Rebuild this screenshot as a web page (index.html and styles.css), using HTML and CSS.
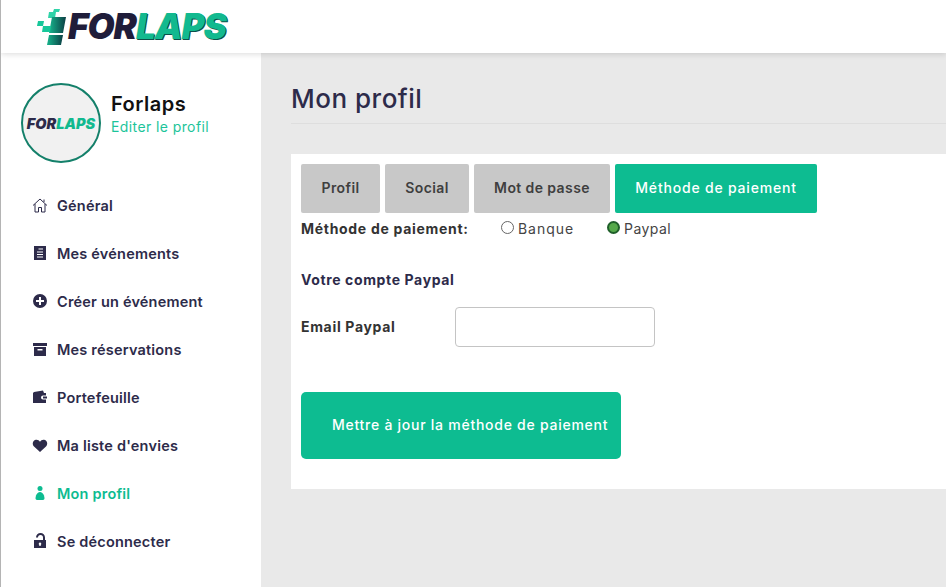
FILE: index.html
```html
<!DOCTYPE html>
<html>
  <head>
    <title>Forlaps - Mon profil</title>
    <meta name="viewport" content="width=device-width, initial-scale=1.0" />
    <link rel="stylesheet" href="styles.css">
  </head>
  <body>
    <header class="topbar">
      <div class="logo">
        <svg class="logo-flag" width="32" height="38" viewBox="0 0 32 38">
          <defs>
            <linearGradient id="flagFill" x1="0" x2="1" y1="0" y2="0">
              <stop offset="0" stop-color="#17b48c" />
              <stop offset="1" stop-color="#0b3f44" />
            </linearGradient>
          </defs>
          <polygon points="18,1 24,1 23,4 17,4" fill="#2fd3a8" />
          <polygon points="13,4 20,4 19,10 12,10" fill="#2fd3a8" />
          <polygon points="16,9 30,9 27,25 13,25" fill="url(#flagFill)" />
          <polygon points="2,13 8,13 7,18 1,18" fill="#17c79a" />
          <polygon points="7,18 15,18 14,24 6,24" fill="#17c79a" />
          <polygon points="13,27 27,27 25,37 11,37" fill="url(#flagFill)" />
        </svg>
        <span class="logo-text">FOR<em>LAPS</em></span>
      </div>
    </header>

    <div class="page">
      <aside class="sidebar">
        <div class="user">
          <div class="avatar"><span>FOR<em>LAPS</em></span></div>
          <div class="user-info">
            <div class="user-name">Forlaps</div>
            <a class="user-edit">Editer le profil</a>
          </div>
        </div>

        <nav class="menu">
          <a class="menu-item">
            <svg class="icon" viewBox="0 0 16 16" fill="none" stroke="currentColor" stroke-width="1"><path d="M1 8.500 8 2l7 6.500M12 5V2.500M3 7v8h3.500v-4.500h3V15H13V7" /></svg>
            Général
          </a>
          <a class="menu-item">
            <svg class="icon" viewBox="0 0 16 16"><path fill-rule="evenodd" d="M2 1h12v14H2zM6.500 3.500v1H11v-1zM5 6.500v1h6v-1zM5 9v1h6V9zM5 11.500v1h6v-1z" fill="currentColor" /></svg>
            Mes événements
          </a>
          <a class="menu-item">
            <svg class="icon" viewBox="0 0 16 16"><path fill-rule="evenodd" d="M8 1a7 7 0 1 0 0 14A7 7 0 0 0 8 1zM7 4h2v3h3v2H9v3H7V9H4V7h3z" fill="currentColor" /></svg>
            Créer un événement
          </a>
          <a class="menu-item">
            <svg class="icon" viewBox="0 0 16 16"><path fill-rule="evenodd" d="M1 2h14v3H1zM2 6h12v9H2zM5.500 8v1.500h5V8z" fill="currentColor" /></svg>
            Mes réservations
          </a>
          <a class="menu-item">
            <svg class="icon" viewBox="0 0 16 16"><path fill-rule="evenodd" d="M1 4 2 3l9-1.500L12 4h2v2.500h-3a2 2 0 0 0 0 4h3V14H1zM11 7.500h4v2h-4z" fill="currentColor" /></svg>
            Portefeuille
          </a>
          <a class="menu-item">
            <svg class="icon" viewBox="0 0 16 16"><path d="M8 15 2 9.500C0 7.500.5 4 3 3c2-.8 4 0 5 1.700C9 3 11 2.200 13 3c2.500 1 3 4.500 1 6.500z" fill="currentColor" /></svg>
            Ma liste d'envies
          </a>
          <a class="menu-item active">
            <svg class="icon" viewBox="0 0 16 16"><circle cx="8" cy="3.500" r="2.500" fill="currentColor" /><path d="M8 7c3 0 4.500 4 4.500 6.500 0 1.500-1.500 1.500-2 1.500h-5c-.5 0-2 0-2-1.500C3.500 11 5 7 8 7z" fill="currentColor" /></svg>
            Mon profil
          </a>
          <a class="menu-item">
            <svg class="icon" viewBox="0 0 16 16"><path fill-rule="evenodd" d="M2 7h9V4.500a2.500 2.500 0 0 0-5 0H4a4.500 4.500 0 0 1 9 0V7h1v8H2zM8 9.500a1.300 1.300 0 0 0-.7 2.400V13h1.400v-1.100A1.300 1.300 0 0 0 8 9.500z" fill="currentColor" /></svg>
            Se déconnecter
          </a>
        </nav>
      </aside>

      <main class="content">
        <h1 class="page-title">Mon profil</h1>

        <section class="card">
          <div class="tabs">
            <a class="tab tab-profil">Profil</a>
            <a class="tab tab-social">Social</a>
            <a class="tab tab-pass">Mot de passe</a>
            <a class="tab tab-pay active">Méthode de paiement</a>
          </div>

          <div class="method-row">
            <span class="method-label">Méthode de paiement:</span>
            <label class="radio radio-bank"><input type="radio" name="method" />Banque</label>
            <label class="radio radio-paypal"><input type="radio" name="method" checked />Paypal</label>
          </div>

          <h2 class="account-title">Votre compte Paypal</h2>

          <div class="field">
            <label class="field-label" for="email">Email Paypal</label>
            <input class="field-input" type="text" id="email" />
          </div>

          <button class="submit">Mettre à jour la méthode de paiement</button>
        </section>
      </main>
    </div>
  </body>
</html>
```

FILE: styles.css
```css
html,
body {
  height: 100%;
}

body {
  margin: 0;
  background: #e9e9e9;
  border-left: 1px solid #b4b4b4;
  display: flex;
  flex-direction: column;
  overflow: hidden;
  font-family: Inter, "Noto Sans", sans-serif;
  color: #2d2b4a;
}

a {
  display: block;
}

.topbar {
  height: 53px;
  flex-shrink: 0;
  background: white;
  box-shadow: 0 1px 6px rgba(0, 0, 0, 0.15);
  position: relative;
  padding-left: 35px;
}

.logo {
  display: flex;
  align-items: center;
  height: 53px;
}

.logo-text {
  font-size: 35px;
  line-height: 35px;
  font-weight: 900;
  font-style: italic;
  color: #1f1d3a;
  letter-spacing: -1px;
}

.logo-text em {
  color: #12b98f;
  text-shadow: 1px 1px 0 #0d4f49;
}

.avatar em {
  color: #12b98f;
}

.page {
  flex-grow: 1;
  display: flex;
}

/* Sidebar */
.sidebar {
  width: 260px;
  flex-shrink: 0;
  background: white;
}

.user {
  display: flex;
  align-items: center;
  gap: 10px;
  padding: 30px 0 0 20px;
}

.avatar {
  width: 80px;
  height: 80px;
  box-sizing: border-box;
  border: 2px solid #14806a;
  border-radius: 50%;
  background: #f1f1f1;
  display: flex;
  align-items: center;
  justify-content: center;
  font-size: 14.500px;
  font-weight: 900;
  font-style: italic;
  color: #2d2b4a;
}

.user-info {
  padding-bottom: 19px;
}

.user-name {
  font-size: 20px;
  line-height: 26px;
  font-weight: 600;
  letter-spacing: 0.5px;
  color: #111;
}

.user-edit {
  font-size: 14px;
  line-height: 20px;
  letter-spacing: 0.4px;
  color: #1cc49a;
}

.menu {
  padding: 18px 0 0 31px;
}

.menu-item {
  height: 48px;
  display: flex;
  align-items: center;
  gap: 9px;
  font-size: 14.500px;
  font-weight: 600;
  letter-spacing: 0.2px;
  color: #2d2b4a;
}

.menu-item.active {
  color: #0dbc91;
}

.icon {
  width: 16px;
  height: 16px;
  flex-shrink: 0;
}

/* Main column */
.content {
  flex-grow: 1;
  padding: 0 0 0 30px;
}

.page-title {
  margin: 0;
  height: 70px;
  line-height: 92px;
  border-bottom: 1px solid #dedede;
  font-size: 26px;
  font-weight: 500;
  letter-spacing: 0.5px;
  color: #2d2b4a;
}

.card {
  margin-top: 30px;
  height: 335px;
  box-sizing: border-box;
  background: white;
  padding: 10px;
}

.tabs {
  display: flex;
  gap: 5px;
}

.tab {
  height: 49px;
  box-sizing: border-box;
  line-height: 48px;
  text-align: center;
  background: #c8c8c8;
  border-radius: 2px;
  font-size: 14px;
  font-weight: 600;
  letter-spacing: 0.4px;
  color: #3f3f3f;
}

.tab-profil {
  width: 79px;
}

.tab-social {
  width: 84px;
}

.tab-pass {
  width: 136px;
}

.tab-pay {
  width: 202px;
}

.tab.active {
  background: #0dbc91;
  color: white;
  font-weight: 500;
  letter-spacing: 0.8px;
}

.method-row {
  display: flex;
  align-items: center;
  height: 30px;
  font-size: 14px;
}

.method-label {
  width: 200px;
  font-weight: 700;
  letter-spacing: 0.7px;
  color: #333;
}

.radio {
  display: flex;
  align-items: center;
  gap: 4px;
  color: #444;
}

.radio-bank {
  width: 106px;
  letter-spacing: 0.95px;
}

.radio-paypal {
  letter-spacing: 0.45px;
}

.radio input {
  appearance: none;
  width: 13px;
  height: 13px;
  margin: 0 0 2px;
  border: 1px solid #666;
  border-radius: 50%;
  background: white;
}

.radio input:checked {
  border: 2px solid #1f5f2a;
  background: #55a94a;
}

.account-title {
  margin: 0;
  padding-top: 27px;
  line-height: 20px;
  font-size: 14px;
  font-weight: 700;
  letter-spacing: 0.63px;
  color: #2d2b4a;
}

.field {
  display: flex;
  align-items: center;
  margin-top: 17px;
}

.field-label {
  width: 154px;
  padding-bottom: 1px;
  font-size: 14px;
  font-weight: 700;
  letter-spacing: 0.67px;
  color: #333;
}

.field-input {
  width: 200px;
  height: 40px;
  box-sizing: border-box;
  border: 1px solid #c4c4c4;
  border-radius: 4px;
  outline: none;
}

.submit {
  display: block;
  margin-top: 45px;
  width: 320px;
  height: 67px;
  padding: 0 0 2px 31px;
  border: none;
  border-radius: 5px;
  background: #0dbc91;
  color: white;
  text-align: left;
  font-family: inherit;
  font-size: 14px;
  font-weight: 500;
  letter-spacing: 0.74px;
}
```
